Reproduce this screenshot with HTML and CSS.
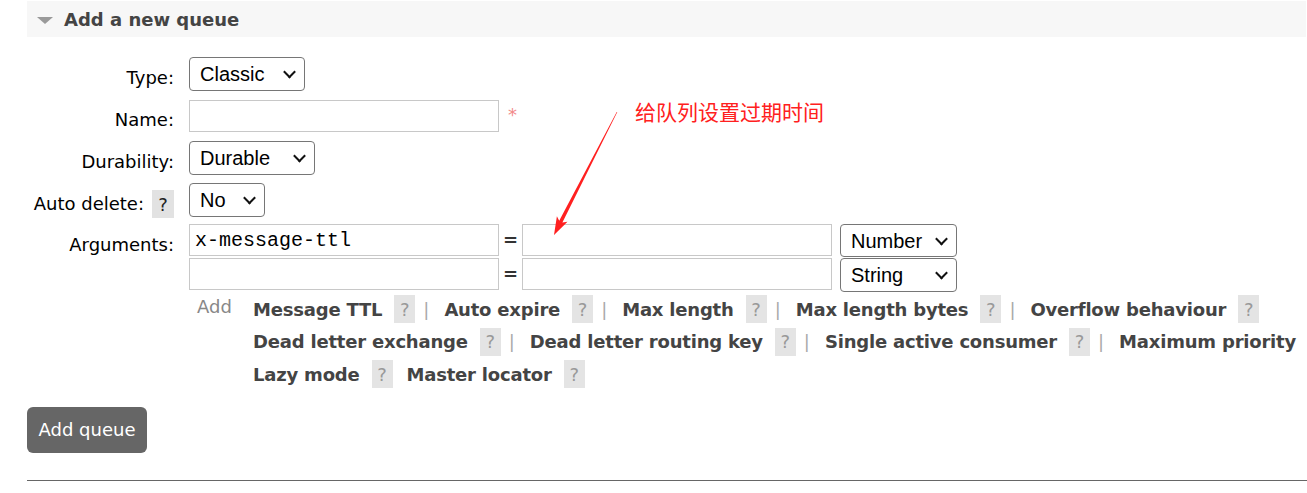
FILE: index.html
```html
<!DOCTYPE html>
<html lang="en">
<head>
<meta charset="utf-8">
<title>Add a new queue</title>
<link rel="stylesheet" href="styles.css">
</head>
<body>
<div class="page">
  <div class="section-head"><span class="tri"></span><h2>Add a new queue</h2></div>

  <form class="form">
    <div class="row">
      <div class="lbl"><span class="lbl-text">Type:</span></div>
      <span class="sw"><select class="sel w-type"><option>Classic</option><option>Quorum</option><option>Stream</option></select></span>
    </div>
    <div class="row">
      <div class="lbl"><span class="lbl-text">Name:</span></div>
      <input class="txt" type="text" value="">
      <span class="req">*</span>
    </div>
    <div class="row">
      <div class="lbl"><span class="lbl-text">Durability:</span></div>
      <span class="sw"><select class="sel w-dur"><option>Durable</option><option>Transient</option></select></span>
    </div>
    <div class="row row-ad">
      <div class="lbl"><span class="lbl-text">Auto delete:</span><span class="help-lbl">?</span></div>
      <span class="sw"><select class="sel w-ad"><option>No</option><option>Yes</option></select></span>
    </div>
    <div class="row row-args">
      <div class="lbl"><span class="lbl-text">Arguments:</span></div>
      <div class="args">
        <div class="argline">
          <input class="txt" type="text" value="x-message-ttl">
          <span class="eq">=</span>
          <input class="txt" type="text" value="">
          <span class="sw sw-t"><select class="sel w-t"><option>Number</option><option>String</option><option>Boolean</option><option>List</option></select></span>
        </div>
        <div class="argline">
          <input class="txt" type="text" value="">
          <span class="eq">=</span>
          <input class="txt" type="text" value="">
          <span class="sw sw-t"><select class="sel w-t"><option>String</option><option>Number</option><option>Boolean</option><option>List</option></select></span>
        </div>
      </div>
    </div>
    <div class="links">
      <span class="add">Add</span>
      <div class="link-lines">
        <div class="ll">
          <span class="lk">Message TTL</span><span class="hb">?</span><span class="sep">|</span>
          <span class="lk">Auto expire</span><span class="hb">?</span><span class="sep">|</span>
          <span class="lk">Max length</span><span class="hb">?</span><span class="sep">|</span>
          <span class="lk">Max length bytes</span><span class="hb">?</span><span class="sep">|</span>
          <span class="lk">Overflow behaviour</span><span class="hb">?</span>
        </div>
        <div class="ll">
          <span class="lk">Dead letter exchange</span><span class="hb">?</span><span class="sep">|</span>
          <span class="lk">Dead letter routing key</span><span class="hb">?</span><span class="sep">|</span>
          <span class="lk">Single active consumer</span><span class="hb">?</span><span class="sep">|</span>
          <span class="lk">Maximum priority</span>
        </div>
        <div class="ll">
          <span class="lk">Lazy mode</span><span class="hb">?</span>
          <span class="lk lk-gap">Master locator</span><span class="hb">?</span>
        </div>
      </div>
    </div>
    <button class="btn" type="button">Add queue</button>
  </form>
  <div class="rule"></div>

  <div class="note">给队列设置过期时间</div>
  <svg class="arrow" viewBox="540 100 90 145" width="90" height="145" aria-hidden="true">
    <polygon points="554,235 567.5,221.7 562.4,222.5 617.3,112.1 616.7,111.9 559.2,220.8 556.9,216.3" fill="#ff2020"/>
  </svg>
</div>
</body>
</html>
```

FILE: styles.css
```css
* { box-sizing: border-box; }
html, body { margin: 0; padding: 0; background: #fff; overflow: hidden; }
body {
  width: 1307px;
  height: 493px;
  font-family: "DejaVu Sans", Verdana, sans-serif;
  font-size: 18px;
  color: #000;
}
.page { position: relative; padding: 1px 0 0 27px; }

.section-head {
  width: 1279px;
  height: 36px;
  background: #f7f7f7;
  display: flex;
  align-items: center;
  padding-left: 10px;
}
.tri {
  width: 0; height: 0;
  border-left: 8px solid transparent;
  border-right: 8px solid transparent;
  border-top: 7px solid #9a9a9a;
  margin-right: 11px;
  margin-top: 2px;
}
.section-head h2 {
  margin: 0;
  font-size: 18px;
  line-height: 21px;
  font-weight: bold;
  color: #444;
}

.form { margin-top: 20px; }
.row { display: flex; align-items: flex-start; height: 42px; }
.row-ad { height: 41px; }
.row-args { height: auto; }

.lbl {
  width: 147px;
  flex: none;
  display: flex;
  justify-content: flex-end;
  align-items: flex-start;
  margin-right: 15px;
}
.lbl-text { padding-top: 10px; line-height: 21px; }
.help-lbl {
  margin-left: 8px;
  margin-top: 7px;
  width: 22px;
  height: 28px;
  background: #e2e2e2;
  color: #222;
  display: flex;
  align-items: center;
  justify-content: center;
  line-height: 21px;
}

.txt {
  width: 310px;
  height: 32px;
  margin: 1px 0 0 0;
  border: 1px solid #c8c8c8;
  padding: 0 5px;
  font: 20px "Liberation Mono", "Courier New", monospace;
  color: #000;
  background: #fff;
  outline: none;
}
.row-args .txt { margin-top: 0; }
.req { color: #f28a8a; margin-left: 9px; padding-top: 5px; line-height: 21px; }

.sw { position: relative; display: inline-block; }
.sw::after {
  content: "";
  position: absolute;
  right: 11px;
  top: 50%;
  width: 7px;
  height: 7px;
  border-right: 2px solid #111;
  border-bottom: 2px solid #111;
  transform: translateY(-72%) rotate(45deg);
  pointer-events: none;
}
.sel {
  -webkit-appearance: none;
  appearance: none;
  display: block;
  height: 34px;
  border: 1px solid #767676;
  border-radius: 4px;
  background: #fff;
  color: #000;
  font: 20px "Liberation Sans", Arial, sans-serif;
  padding: 0 0 0 10px;
  margin: 0;
  outline: none;
}
.w-type { width: 116px; }
.w-dur { width: 126px; }
.w-ad { width: 76px; }
.w-t { width: 117px; height: 33px; }
.sw-t { margin-left: 8px; }
.argline + .argline .w-t { height: 34px; }

.args { display: flex; flex-direction: column; }
.argline { display: flex; align-items: flex-start; height: 34px; }
.eq { width: 23px; text-align: center; line-height: 32px; color: #333; font-weight: bold; }

.links { display: flex; margin: 1px 0 0 162px; }
.add { width: 64px; flex: none; padding: 3px 0 0 8px; color: #888; line-height: 21px; }
.link-lines { display: flex; flex-direction: column; }
.ll { display: flex; align-items: center; height: 32.5px; white-space: nowrap; }
.lk { font-weight: bold; color: #444; line-height: 21px; letter-spacing: -0.2px; }
.lk-gap { margin-left: 14px; }
.hb {
  flex: none;
  width: 21px;
  height: 28px;
  margin-left: 12px;
  background: #e4e4e4;
  color: #999;
  display: flex;
  align-items: center;
  justify-content: center;
  line-height: 21px;
}
.sep { color: #aaa; margin: 0 15px 0 8px; line-height: 21px; }

.btn {
  display: block;
  margin-top: 16px;
  width: 120px;
  height: 46px;
  background: #666;
  color: #fff;
  border: none;
  border-radius: 6px;
  font: 18px "DejaVu Sans", Verdana, sans-serif;
  padding: 0;
}
.rule { margin-top: 27px; width: 1280px; border-top: 1px solid #666; }

.note {
  position: absolute;
  left: 635px;
  top: 101px;
  color: #ff2020;
  font: 21px/21px "Noto Sans CJK SC", sans-serif;
  white-space: nowrap;
}
.arrow { position: absolute; left: 540px; top: 100px; }
```
